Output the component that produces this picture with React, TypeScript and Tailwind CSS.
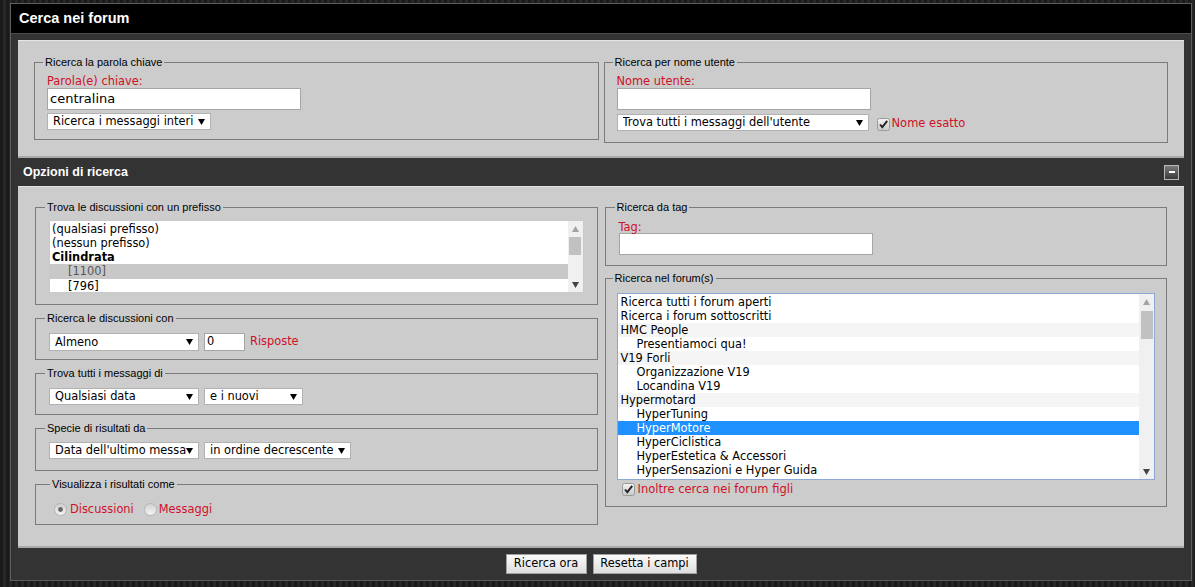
import type { ReactNode } from "react";

const red = "text-[#cf1029]";

function Arrow({ up = false, color = "#000" }: { up?: boolean; color?: string }) {
  return (
    <svg width="7" height="6" viewBox="0 0 7 6" className="shrink-0">
      <polygon points={up ? "0,6 7,6 3.5,0" : "0,0 7,0 3.5,6"} fill={color} />
    </svg>
  );
}

function Box({ title, className = "", children }: { title: string; className?: string; children: ReactNode }) {
  return (
    <fieldset className={`border border-[#7b7b7b] ${className}`}>
      <legend className="ml-[-4px] px-[2px] font-['Liberation_Sans',sans-serif] text-[11px] leading-[13px] text-black">
        {title}
      </legend>
      {children}
    </fieldset>
  );
}

function Select({ value, className }: { value: string; className: string }) {
  return (
    <div className={`flex h-[17px] items-center border border-[#b2b2b2] bg-white pl-[5px] pr-[5px] ${className}`}>
      <span className="min-w-0 flex-1 overflow-hidden whitespace-nowrap leading-[15px]">{value}</span>
      <Arrow />
    </div>
  );
}

function TextInput({ value = "", className }: { value?: string; className: string }) {
  return (
    <div className={`flex h-[22px] items-center border border-[#a6a6a6] bg-white pl-[2px] text-[13px] ${className}`}>
      {value}
    </div>
  );
}

function Check() {
  return (
    <svg width="13" height="13" viewBox="0 0 13 13" className="shrink-0">
      <defs>
        <linearGradient id="cb" x1="0" y1="0" x2="0" y2="1">
          <stop offset="0" stopColor="#f4f4f4" />
          <stop offset="1" stopColor="#c9c9c9" />
        </linearGradient>
      </defs>
      <rect x="0.5" y="0.5" width="12" height="12" rx="2" fill="url(#cb)" stroke="#9a9a9a" />
      <path d="M3 6.5 L5.3 9.2 L10.2 2.8" fill="none" stroke="#222" strokeWidth="1.9" />
    </svg>
  );
}

function Radio({ on }: { on: boolean }) {
  return (
    <svg width="13" height="13" viewBox="0 0 13 13" className="shrink-0">
      <defs>
        <linearGradient id="rb" x1="0" y1="0" x2="0" y2="1">
          <stop offset="0" stopColor="#d0d0d0" />
          <stop offset="1" stopColor="#f6f6f6" />
        </linearGradient>
      </defs>
      <circle cx="6.5" cy="6.5" r="6" fill="url(#rb)" stroke="#b4b4b4" />
      {on && <circle cx="6.5" cy="6.5" r="2.4" fill="#666" />}
    </svg>
  );
}

function Scrollbar({ thumb }: { thumb: string }) {
  return (
    <div className="flex w-[15px] shrink-0 flex-col items-center bg-[#f0f0f0]">
      <div className="flex h-[15px] items-center">
        <Arrow up color="#a3a3a3" />
      </div>
      <div className={`w-[12px] bg-[#c1c1c1] ${thumb}`} />
      <div className="flex-1" />
      <div className="flex h-[15px] items-center">
        <Arrow color="#444" />
      </div>
    </div>
  );
}

const forums = [
  { t: "Ricerca tutti i forum aperti", i: false, cat: false, sel: false },
  { t: "Ricerca i forum sottoscritti", i: false, cat: false, sel: false },
  { t: "HMC People", i: false, cat: true, sel: false },
  { t: "Presentiamoci qua!", i: true, cat: false, sel: false },
  { t: "V19 Forli", i: false, cat: true, sel: false },
  { t: "Organizzazione V19", i: true, cat: false, sel: false },
  { t: "Locandina V19", i: true, cat: false, sel: false },
  { t: "Hypermotard", i: false, cat: true, sel: false },
  { t: "HyperTuning", i: true, cat: false, sel: false },
  { t: "HyperMotore", i: true, cat: false, sel: true },
  { t: "HyperCiclistica", i: true, cat: false, sel: false },
  { t: "HyperEstetica & Accessori", i: true, cat: false, sel: false },
  { t: "HyperSensazioni e Hyper Guida", i: true, cat: false, sel: false },
];

function Button({ children, className }: { children: ReactNode; className: string }) {
  return (
    <div
      className={`flex h-[20px] items-center justify-center border border-[#a0a0a0] bg-gradient-to-b from-[#fbfbfb] to-[#dedede] text-[11.4px] ${className}`}
    >
      {children}
    </div>
  );
}

export default function App() {
  return (
    <div className="h-[587px] w-[1195px] overflow-hidden bg-[repeating-linear-gradient(90deg,#1a1a1a_0px,#1a1a1a_3px,#272727_3px,#272727_6px)] pt-[3px] font-['DejaVu_Sans',sans-serif] text-[11.4px] text-black">
      <div className="ml-[10px] w-[1182px] border border-[#5e5e5e] bg-[#333333]">
        <div className="flex h-[29px] items-center bg-black pl-[8px] font-['Liberation_Sans',sans-serif] text-[14.5px] font-bold text-white">
          Cerca nei forum
        </div>
        <div className="border-t border-[#4c4c4c] px-[7px] pt-[6px]">
          {/* parola chiave / nome utente */}
          <div className="grid grid-cols-2 items-start gap-[5px] border-t border-t-[#e4e4e4] border-b-2 border-b-[#a9a9a9] bg-[#cccccc] px-[16px] pb-[13px] pt-[15px]">
            <Box title="Ricerca la parola chiave" className="px-[12px] pb-[9px] pt-[6px]">
              <div className={`leading-[13px] ${red}`}>Parola(e) chiave:</div>
              <TextInput value="centralina" className="w-[254px]" />
              <Select value="Ricerca i messaggi interi" className="mt-[3px] w-[164px]" />
            </Box>
            <Box title="Ricerca per nome utente" className="px-[12px] pb-[11px] pt-[6px]">
              <div className={`leading-[13px] ${red}`}>Nome utente:</div>
              <TextInput className="w-[254px]" />
              <div className="mt-[4px] flex h-[17px] items-center">
                <Select value="Trova tutti i messaggi dell'utente" className="w-[252px]" />
                <div className="ml-[8px] mt-[3px] flex items-center gap-[2px]">
                  <Check />
                  <span className={`text-[11.5px] ${red}`}>Nome esatto</span>
                </div>
              </div>
            </Box>
          </div>

          {/* opzioni header */}
          <div className="flex h-[28px] items-center justify-between pl-[5px] pr-[5px]">
            <span className="font-['Liberation_Sans',sans-serif] text-[12.5px] font-bold text-white">Opzioni di ricerca</span>
            <div className="flex h-[15px] w-[15px] items-center justify-center border border-[#b8b8b8] bg-gradient-to-b from-[#7a7a7a] to-[#3a3a3a]">
              <div className="h-[2px] w-[6px] bg-white" />
            </div>
          </div>

          {/* opzioni panel */}
          <div className="grid grid-cols-2 items-start gap-[7px] border-t border-t-[#e4e4e4] border-b-2 border-b-[#a9a9a9] bg-[#cccccc] px-[17px] pb-[21px] pt-[14px]">
            <div className="flex flex-col gap-[7px]">
              <Box title="Trova le discussioni con un prefisso" className="px-[13px] pb-[11px] pt-[6px]">
                <div className="flex h-[73px] border border-[#c9c9c9] bg-white">
                  <div className="flex-1 pt-[1px]">
                    <div className="h-[14px] pl-[2px] leading-[14px]">(qualsiasi prefisso)</div>
                    <div className="h-[14px] pl-[2px] leading-[14px]">(nessun prefisso)</div>
                    <div className="h-[14px] pl-[2px] font-bold leading-[14px]">Cilindrata</div>
                    <div className="h-[15px] bg-[#c8c8c8] pl-[18px] leading-[15px] text-[#555]">[1100]</div>
                    <div className="h-[14px] pl-[18px] leading-[14px]">[796]</div>
                  </div>
                  <Scrollbar thumb="mt-[1px] h-[18px]" />
                </div>
              </Box>
              <Box title="Ricerca le discussioni con" className="px-[13px] pb-[8px] pt-[8px]">
                <div className="flex h-[18px] items-center">
                  <Select value="Almeno" className="h-[18px] w-[150px]" />
                  <div className="ml-[5px] flex h-[18px] w-[41px] items-center border border-[#a6a6a6] bg-white pl-[2px]">0</div>
                  <span className={`ml-[5px] ${red}`}>Risposte</span>
                </div>
              </Box>
              <Box title="Trova tutti i messaggi di" className="px-[13px] pb-[9px] pt-[8px]">
                <div className="flex h-[17px] items-center gap-[5px]">
                  <Select value="Qualsiasi data" className="w-[150px]" />
                  <Select value="e i nuovi" className="w-[99px]" />
                </div>
              </Box>
              <Box title="Specie di risultati da" className="px-[13px] pb-[11px] pt-[7px]">
                <div className="flex h-[17px] items-center gap-[5px]">
                  <Select value="Data dell'ultimo messaggio" className="w-[150px]" />
                  <Select value="in ordine decrescente" className="w-[147px]" />
                </div>
              </Box>
              <Box title="Visualizza i risultati come" className="px-[18px] pb-[8px] pt-[11px]">
                <div className="flex h-[14px] items-center leading-[14px]">
                  <Radio on />
                  <span className={`ml-[3px] ${red}`}>Discussioni</span>
                  <span className="ml-[10px] flex">
                    <Radio on={false} />
                  </span>
                  <span className={`ml-[2px] ${red}`}>Messaggi</span>
                </div>
              </Box>
            </div>

            <div className="flex flex-col gap-[6px]">
              <Box title="Ricerca da tag" className="px-[13px] pb-[10px] pt-[7px]">
                <div className={`leading-[12px] ${red}`}>Tag:</div>
                <TextInput className="w-[254px]" />
              </Box>
              <Box title="Ricerca nel forum(s)" className="px-[11px] pb-[10px] pt-[8px]">
                <div className="flex h-[187px] border border-[#8ea7d4] bg-white">
                  <div className="flex-1 pt-[1px]">
                    {forums.map((f) => (
                      <div
                        key={f.t}
                        className={`h-[14px] whitespace-nowrap leading-[14px] ${f.i ? "pl-[19px]" : "pl-[3px]"} ${
                          f.sel ? "bg-[#1e90ff] text-white" : f.cat ? "bg-[#f5f5f5]" : ""
                        }`}
                      >
                        {f.t}
                      </div>
                    ))}
                  </div>
                  <Scrollbar thumb="mt-[2px] h-[28px]" />
                </div>
                <div className="mt-[3px] flex h-[13px] items-center gap-[3px] pl-[5px]">
                  <Check />
                  <span className={`text-[11.5px] ${red}`}>Inoltre cerca nei forum figli</span>
                </div>
              </Box>
            </div>
          </div>

          {/* footer */}
          <div className="flex h-[32px] items-center justify-center gap-[6px]">
            <Button className="w-[81px]">Ricerca ora</Button>
            <Button className="w-[104px]">Resetta i campi</Button>
          </div>
        </div>
      </div>
    </div>
  );
}
